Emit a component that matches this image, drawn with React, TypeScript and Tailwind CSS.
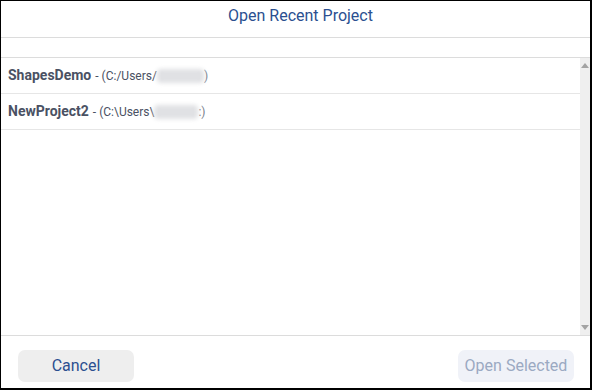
import React from "react";

const rows = [
  { name: "ShapesDemo", path: "(C:/Users/", end: ")", blur: 47 },
  { name: "NewProject2", path: "(C:\\Users\\", end: ":)", blur: 44 },
];

export default function App() {
  return (
    <div
      className="w-[592px] h-[390px] bg-white border-l border-t border-r-2 border-b-2 border-black flex flex-col overflow-hidden"
      style={{ fontFamily: "Roboto, 'Liberation Sans', sans-serif" }}
    >
      <div className="h-[37px] flex items-start justify-center pt-[3px] pl-[10px] text-[16px] text-[#2b4f90] border-b border-[#dcdcdc] shrink-0">
        Open Recent Project
      </div>
      <div className="h-[20px] border-b border-[#dcdcdc] shrink-0" />
      <div className="flex flex-1 min-h-0 border-b border-[#dcdcdc]">
        <div className="flex-1 flex flex-col">
          {rows.map((r) => (
            <div
              key={r.name}
              className="h-[36px] flex items-center pl-[7px] border-b border-[#e6e6e6] text-[#4a5163]"
            >
              <span className="font-bold text-[14px]">{r.name}</span>
              <span className="text-[12px] ml-[4px]">- {r.path}</span>
              <span
                className="inline-block h-[14px] bg-[#e0e1e4] blur-[2px] rounded-sm"
                style={{ width: r.blur }}
              />
              <span className="text-[12px] text-[#7a7f8c]">{r.end}</span>
            </div>
          ))}
        </div>
        <div className="w-[10px] bg-[#efefef] flex flex-col justify-between items-center py-[5px]">
          <svg width="8" height="5" viewBox="0 0 8 5">
            <path d="M0 5 L4 0 L8 5 Z" fill="#a3a3a3" />
          </svg>
          <svg width="8" height="5" viewBox="0 0 8 5">
            <path d="M0 0 L4 5 L8 0 Z" fill="#a3a3a3" />
          </svg>
        </div>
      </div>
      <div className="h-[52px] shrink-0 flex items-start justify-between pt-[14px] pl-[17px] pr-[16px]">
        <button className="w-[116px] h-[32px] rounded-[7px] bg-[#eeeeee] text-[#2b4f90] text-[16px]">
          Cancel
        </button>
        <button className="w-[116px] h-[32px] rounded-[7px] bg-[#f0f2f8] text-[#9ba9c2] text-[16px]">
          Open Selected
        </button>
      </div>
    </div>
  );
}
